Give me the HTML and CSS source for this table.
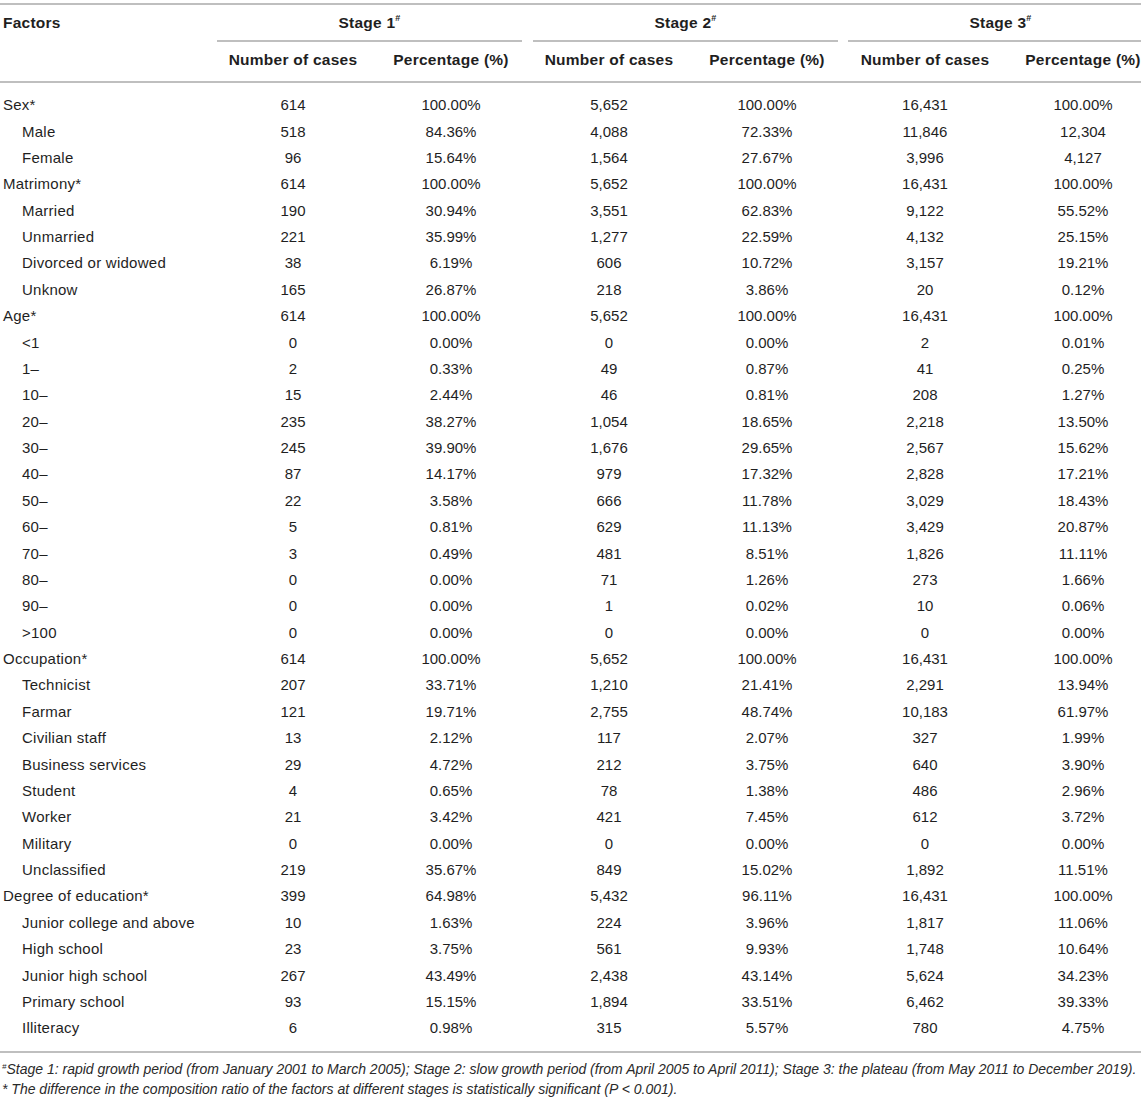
FILE: index.html
```html
<!DOCTYPE html>
<html>
<head>
<meta charset="utf-8">
<link rel="stylesheet" href="styles.css">
</head>
<body>
<div class="wrap">
<table class="data">
<colgroup>
<col class="c-factor"><col class="c-num"><col class="c-num"><col class="c-num"><col class="c-num"><col class="c-num"><col class="c-last">
</colgroup>
<thead>
<tr class="h1">
<th class="factor-h" rowspan="2">Factors</th>
<th class="stage" colspan="2"><div class="stage-in s1">Stage 1<sup>#</sup></div></th>
<th class="stage" colspan="2"><div class="stage-in s2">Stage 2<sup>#</sup></div></th>
<th class="stage" colspan="2"><div class="stage-in s3">Stage 3<sup>#</sup></div></th>
</tr>
<tr class="h2">
<th class="sub">Number of cases</th><th class="sub">Percentage (%)</th>
<th class="sub">Number of cases</th><th class="sub">Percentage (%)</th>
<th class="sub">Number of cases</th><th class="sub last">Percentage (%)</th>
</tr>
</thead>
<tbody>
<tr class="first"><td class="f">Sex*</td><td>614</td><td>100.00%</td><td>5,652</td><td>100.00%</td><td>16,431</td><td class="last">100.00%</td></tr>
<tr><td class="f ind">Male</td><td>518</td><td>84.36%</td><td>4,088</td><td>72.33%</td><td>11,846</td><td class="last">12,304</td></tr>
<tr><td class="f ind">Female</td><td>96</td><td>15.64%</td><td>1,564</td><td>27.67%</td><td>3,996</td><td class="last">4,127</td></tr>
<tr><td class="f">Matrimony*</td><td>614</td><td>100.00%</td><td>5,652</td><td>100.00%</td><td>16,431</td><td class="last">100.00%</td></tr>
<tr><td class="f ind">Married</td><td>190</td><td>30.94%</td><td>3,551</td><td>62.83%</td><td>9,122</td><td class="last">55.52%</td></tr>
<tr><td class="f ind">Unmarried</td><td>221</td><td>35.99%</td><td>1,277</td><td>22.59%</td><td>4,132</td><td class="last">25.15%</td></tr>
<tr><td class="f ind">Divorced or widowed</td><td>38</td><td>6.19%</td><td>606</td><td>10.72%</td><td>3,157</td><td class="last">19.21%</td></tr>
<tr><td class="f ind">Unknow</td><td>165</td><td>26.87%</td><td>218</td><td>3.86%</td><td>20</td><td class="last">0.12%</td></tr>
<tr><td class="f">Age*</td><td>614</td><td>100.00%</td><td>5,652</td><td>100.00%</td><td>16,431</td><td class="last">100.00%</td></tr>
<tr><td class="f ind">&lt;1</td><td>0</td><td>0.00%</td><td>0</td><td>0.00%</td><td>2</td><td class="last">0.01%</td></tr>
<tr><td class="f ind">1–</td><td>2</td><td>0.33%</td><td>49</td><td>0.87%</td><td>41</td><td class="last">0.25%</td></tr>
<tr><td class="f ind">10–</td><td>15</td><td>2.44%</td><td>46</td><td>0.81%</td><td>208</td><td class="last">1.27%</td></tr>
<tr><td class="f ind">20–</td><td>235</td><td>38.27%</td><td>1,054</td><td>18.65%</td><td>2,218</td><td class="last">13.50%</td></tr>
<tr><td class="f ind">30–</td><td>245</td><td>39.90%</td><td>1,676</td><td>29.65%</td><td>2,567</td><td class="last">15.62%</td></tr>
<tr><td class="f ind">40–</td><td>87</td><td>14.17%</td><td>979</td><td>17.32%</td><td>2,828</td><td class="last">17.21%</td></tr>
<tr><td class="f ind">50–</td><td>22</td><td>3.58%</td><td>666</td><td>11.78%</td><td>3,029</td><td class="last">18.43%</td></tr>
<tr><td class="f ind">60–</td><td>5</td><td>0.81%</td><td>629</td><td>11.13%</td><td>3,429</td><td class="last">20.87%</td></tr>
<tr><td class="f ind">70–</td><td>3</td><td>0.49%</td><td>481</td><td>8.51%</td><td>1,826</td><td class="last">11.11%</td></tr>
<tr><td class="f ind">80–</td><td>0</td><td>0.00%</td><td>71</td><td>1.26%</td><td>273</td><td class="last">1.66%</td></tr>
<tr><td class="f ind">90–</td><td>0</td><td>0.00%</td><td>1</td><td>0.02%</td><td>10</td><td class="last">0.06%</td></tr>
<tr><td class="f ind">&gt;100</td><td>0</td><td>0.00%</td><td>0</td><td>0.00%</td><td>0</td><td class="last">0.00%</td></tr>
<tr><td class="f">Occupation*</td><td>614</td><td>100.00%</td><td>5,652</td><td>100.00%</td><td>16,431</td><td class="last">100.00%</td></tr>
<tr><td class="f ind">Technicist</td><td>207</td><td>33.71%</td><td>1,210</td><td>21.41%</td><td>2,291</td><td class="last">13.94%</td></tr>
<tr><td class="f ind">Farmar</td><td>121</td><td>19.71%</td><td>2,755</td><td>48.74%</td><td>10,183</td><td class="last">61.97%</td></tr>
<tr><td class="f ind">Civilian staff</td><td>13</td><td>2.12%</td><td>117</td><td>2.07%</td><td>327</td><td class="last">1.99%</td></tr>
<tr><td class="f ind">Business services</td><td>29</td><td>4.72%</td><td>212</td><td>3.75%</td><td>640</td><td class="last">3.90%</td></tr>
<tr><td class="f ind">Student</td><td>4</td><td>0.65%</td><td>78</td><td>1.38%</td><td>486</td><td class="last">2.96%</td></tr>
<tr><td class="f ind">Worker</td><td>21</td><td>3.42%</td><td>421</td><td>7.45%</td><td>612</td><td class="last">3.72%</td></tr>
<tr><td class="f ind">Military</td><td>0</td><td>0.00%</td><td>0</td><td>0.00%</td><td>0</td><td class="last">0.00%</td></tr>
<tr><td class="f ind">Unclassified</td><td>219</td><td>35.67%</td><td>849</td><td>15.02%</td><td>1,892</td><td class="last">11.51%</td></tr>
<tr><td class="f">Degree of education*</td><td>399</td><td>64.98%</td><td>5,432</td><td>96.11%</td><td>16,431</td><td class="last">100.00%</td></tr>
<tr><td class="f ind">Junior college and above</td><td>10</td><td>1.63%</td><td>224</td><td>3.96%</td><td>1,817</td><td class="last">11.06%</td></tr>
<tr><td class="f ind">High school</td><td>23</td><td>3.75%</td><td>561</td><td>9.93%</td><td>1,748</td><td class="last">10.64%</td></tr>
<tr><td class="f ind">Junior high school</td><td>267</td><td>43.49%</td><td>2,438</td><td>43.14%</td><td>5,624</td><td class="last">34.23%</td></tr>
<tr><td class="f ind">Primary school</td><td>93</td><td>15.15%</td><td>1,894</td><td>33.51%</td><td>6,462</td><td class="last">39.33%</td></tr>
<tr class="lastrow"><td class="f ind">Illiteracy</td><td>6</td><td>0.98%</td><td>315</td><td>5.57%</td><td>780</td><td class="last">4.75%</td></tr>
</tbody>
</table>
<div class="notes">
<p class="note"><sup class="nsup">#</sup>Stage 1: rapid growth period (from January 2001 to March 2005); Stage 2: slow growth period (from April 2005 to April 2011); Stage 3: the plateau (from May 2011 to December 2019).</p>
<p class="note">* The difference in the composition ratio of the factors at different stages is statistically significant (P &lt; 0.001).</p>
</div>
</div>
</body>
</html>
```

FILE: styles.css
```css
html, body {
  margin: 0;
  padding: 0;
  background: #ffffff;
}
body {
  font-family: "Liberation Sans", Arial, sans-serif;
  color: #1f1f1f;
}
.wrap {
  width: 1141px;
  padding-top: 3px;
}
.data {
  width: 1141px;
  border-collapse: separate;
  border-spacing: 0;
  table-layout: fixed;
  font-size: 15px;
  line-height: 20px;
  border-top: 2px solid #bfbfbf;
}
.c-factor { width: 211px; }
.c-num { width: 158px; }
.c-last { width: 140px; }

th {
  font-weight: bold;
  padding: 0;
  font-size: 15.5px;
  letter-spacing: 0.25px;
  white-space: nowrap;
}
.factor-h {
  text-align: left;
  vertical-align: top;
  padding: 8px 0 0 3px;
  border-bottom: 2px solid #bfbfbf;
}
.stage {
  padding: 8px 0 0 0;
  text-align: center;
  vertical-align: top;
}
.stage-in {
  padding-bottom: 7px;
  border-bottom: 2px solid #bfbfbf;
  margin: 0 5px 0 6px;
  padding-left: 0;
}
.stage-in.s3 {
  margin: 0 0 0 5px;
  padding-left: 12px;
}
.stage-in sup, .nsup {
  font-size: 9px;
  line-height: 0;
  vertical-align: 0;
  position: relative;
  top: -7px;
  font-weight: bold;
}
.sub {
  padding: 8px 0 11px 6px;
  border-bottom: 2px solid #bfbfbf;
  text-align: center;
}
.sub.last, td.last {
  padding-left: 24px;
}
td {
  padding: 3.2px 0 3.2px 6px;
  text-align: center;
  vertical-align: top;
  white-space: nowrap;
}
td.f {
  text-align: left;
  padding-left: 3px;
  letter-spacing: 0.25px;
}
td.f.ind {
  padding-left: 22px;
}
tr.first td {
  padding-top: 12.2px;
}
tr.lastrow td {
  padding-bottom: 12.2px;
  border-bottom: 2px solid #bfbfbf;
}
.notes {
  padding-top: 6px;
}
.note {
  margin: 0;
  font-style: italic;
  font-size: 14px;
  line-height: 20px;
  padding-left: 2px;
  white-space: nowrap;
  color: #2a2a2a;
}
.nsup {
  font-weight: normal;
  font-style: italic;
  top: -5px;
  font-size: 8px;
}
```
